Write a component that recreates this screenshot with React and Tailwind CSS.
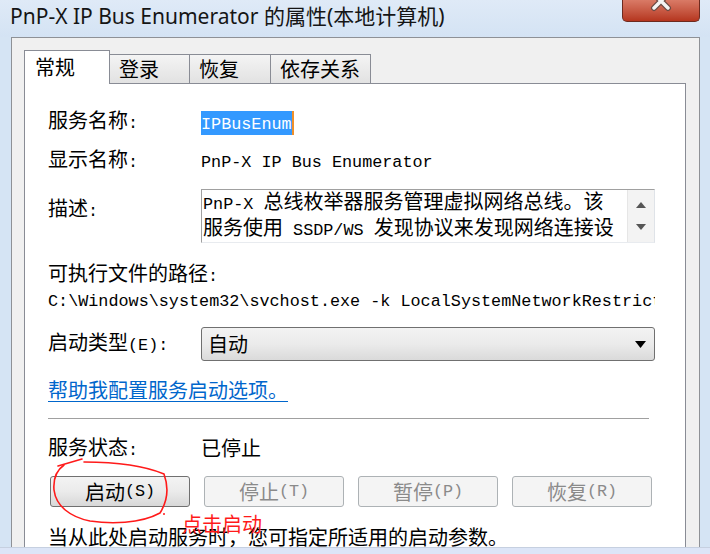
import React from "react";

function M({ children }) {
  return <span className="font-['Liberation_Mono',monospace] text-[16.8px]">{children}</span>;
}

function Row({ label, children, className = "" }) {
  return (
    <div className={`flex items-center h-[22px] ${className}`}>
      <div className="w-[153px] shrink-0 whitespace-nowrap">{label}</div>
      <div className="flex-1 min-w-0 whitespace-nowrap">{children}</div>
    </div>
  );
}

function Tab({ children, active, className = "" }) {
  if (active) {
    return (
      <div className={`relative z-10 -mb-px h-[34px] border border-b-0 border-[#898c95] bg-white pl-[10px] pt-[5px] leading-[22px] ${className}`}>
        {children}
      </div>
    );
  }
  return (
    <div className={`h-[29px] -ml-px border border-b-0 border-[#898c95] bg-gradient-to-b from-[#f4f4f4] to-[#e2e2e2] pl-[9px] pt-[3px] leading-[22px] ${className}`}>
      {children}
    </div>
  );
}

function Btn({ children, disabled }) {
  return disabled ? (
    <div className="w-[140px] h-[31px] rounded-[3px] border border-[#adb2b5] bg-[#f4f4f4] text-[#8a8a8a] flex items-center justify-center">
      {children}
    </div>
  ) : (
    <div className="w-[140px] h-[31px] rounded-[3px] border border-[#707070] bg-gradient-to-b from-[#f3f3f3] via-[#ebebeb] to-[#d8d8d8] flex items-center justify-center">
      {children}
    </div>
  );
}

export default function App() {
  return (
    <div className="relative w-[710px] h-[554px] overflow-hidden bg-[#d5e4f4] flex flex-col font-['Noto_Sans_CJK_SC',sans-serif] text-[20px] text-black">
      {/* title bar */}
      <div className="h-[37px] shrink-0 flex items-start justify-between pl-[10px] bg-gradient-to-b from-[#dfeaf7] to-[#d4e3f4]">
        <div className="pt-[1px] text-[21px] leading-[30px] font-['Noto_Sans','Noto_Sans_CJK_SC',sans-serif] text-[#151515] whitespace-nowrap">
          PnP-X IP Bus Enumerator 的属性(本地计算机)
        </div>
        <div className="mr-[10px] w-[78px] h-[22px] rounded-b-[5px] border border-t-0 border-[#6d2a1f] bg-gradient-to-b from-[#d97a66] to-[#b5351e] overflow-hidden">
          <svg width="78" height="22" viewBox="0 0 78 22">
            <path d="M31 -6 L45 8 M45 -6 L31 8" stroke="#6b4a44" strokeWidth="6" strokeLinecap="round" />
            <path d="M31 -6 L45 8 M45 -6 L31 8" stroke="#f4f4f4" strokeWidth="3.5" strokeLinecap="round" />
          </svg>
        </div>
      </div>

      {/* dialog */}
      <div className="flex-1 min-h-0 flex flex-col ml-[11px] mr-[10px] border border-b-0 border-[#8e9196] bg-[#f0f0f0] pt-[12px] pl-[12px] pr-[13px]">
        <div className="h-[33px] shrink-0 flex items-end">
          <Tab active className="w-[86px]">常规</Tab>
          <Tab className="w-[81px]">登录</Tab>
          <Tab className="w-[82px]">恢复</Tab>
          <Tab className="w-[101px]">依存关系</Tab>
        </div>

        <div className="flex-1 min-h-0 overflow-hidden border border-b-0 border-[#898c95] bg-white pl-[23px] pr-[30px] pt-[26px]">
          <Row label={<>服务名称<M>:</M></>}>
            <span className="inline-block leading-[20px] bg-[#3399ff] text-white border-r-2 border-[#f0902a]">
              <M>IPBusEnum</M>
            </span>
          </Row>

          <Row label={<>显示名称<M>:</M></>} className="mt-[17px]">
            <M>PnP-X IP Bus Enumerator</M>
          </Row>

          <div className="mt-[18px] flex items-start">
            <div className="w-[153px] shrink-0 mt-[8px] leading-[22px]">描述<M>:</M></div>
            <div className="flex-1 h-[54px] flex border-t border-l border-[#a0a0a0] border-r border-r-[#dfe3e8] border-b border-b-[#e8ebef]">
              <div className="flex-1 min-w-0 overflow-hidden leading-[22px] pl-[1px]">
                <div className="whitespace-nowrap"><M>PnP-X </M>总线枚举器服务管理虚拟网络总线。该</div>
                <div className="whitespace-nowrap">服务使用<M> SSDP/WS </M>发现协议来发现网络连接设</div>
              </div>
              <div className="w-[27px] shrink-0 bg-[#f3f3f3] border-l border-[#e6e6e6] flex flex-col items-center justify-between py-[12px]">
                <svg width="10" height="6" viewBox="0 0 10 6"><path d="M0 6 L5 0 L10 6 Z" fill="#555" /></svg>
                <svg width="10" height="6" viewBox="0 0 10 6"><path d="M0 0 L5 6 L10 0 Z" fill="#555" /></svg>
              </div>
            </div>
          </div>

          <div className="mt-[19px] h-[22px] leading-[22px]">可执行文件的路径<M>:</M></div>
          <div className="mt-[3px] h-[22px] leading-[22px] whitespace-nowrap overflow-hidden">
            <M>{"C:\\Windows\\system32\\svchost.exe -k LocalSystemNetworkRestricted"}</M>
          </div>

          <div className="mt-[18px] flex items-center">
            <div className="w-[153px] shrink-0 leading-[22px]">启动类型<M>(E):</M></div>
            <div className="flex-1 h-[34px] rounded-[3px] border border-[#707070] bg-gradient-to-b from-[#f3f3f3] via-[#ebebeb] to-[#dadada] flex items-center justify-between pl-[6px] pr-[8px]">
              <span className="leading-[22px]">自动</span>
              <svg width="11" height="7" viewBox="0 0 11 7"><path d="M0 0 L11 0 L5.5 7 Z" fill="#000" /></svg>
            </div>
          </div>

          <div className="mt-[18px] h-[22px] leading-[22px]">
            <span className="text-[#0066cc] underline underline-offset-[3px] decoration-1">帮助我配置服务启动选项。</span>
          </div>

          <div className="mt-[17px] mr-[6px] h-px bg-[#a0a0a0]"></div>

          <Row label={<>服务状态<M>:</M></>} className="mt-[18px]">
            已停止
          </Row>

          <div className="mt-[17px] ml-[2px] flex gap-[14px]">
            <Btn>启动<M>(S)</M></Btn>
            <Btn disabled>停止<M>(T)</M></Btn>
            <Btn disabled>暂停<M>(P)</M></Btn>
            <Btn disabled>恢复<M>(R)</M></Btn>
          </div>

          <div className="mt-[19px] h-[22px] leading-[22px] whitespace-nowrap">
            当从此处启动服务时，您可指定所适用的启动参数。
          </div>
        </div>
      </div>

      <div className="h-[7px] shrink-0 bg-[#dce5f7] border-t border-[#c6d0e0]"></div>

      {/* red annotation */}
      <svg className="absolute left-0 top-0 pointer-events-none" width="710" height="554" viewBox="0 0 710 554">
        <g fill="none" stroke="#ff1a1a" strokeWidth="1.6" strokeLinecap="round">
          <path d="M58 466 L82 459" />
          <path d="M84 462 C115 462 145 466 164 474 C169 488 167 502 160 513 C140 524 110 524 90 521 C70 517 56 506 54 490 C53 478 57 470 64 465" />
        </g>
        <circle cx="164" cy="514" r="1" fill="#ff1a1a" />
      </svg>
      <div className="absolute left-[182px] top-[513px] text-[20px] leading-[22px] text-[#ff1a1a] whitespace-nowrap">
        点击启动
      </div>
    </div>
  );
}
